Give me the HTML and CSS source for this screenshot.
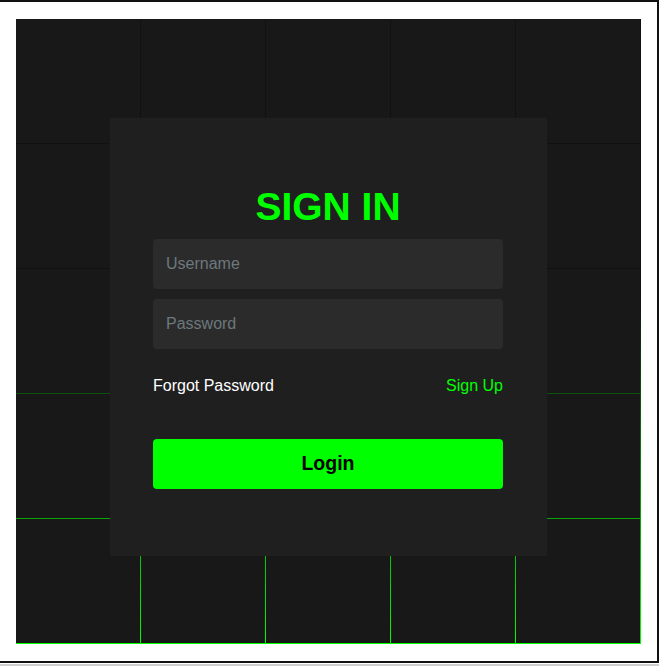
FILE: index.html
```html
<!DOCTYPE html>
<html>
<head>
    <title>Sign In</title>
    <link rel="stylesheet" href="styles.css">
</head>
<body>
    <div class="frame">
        <section class="scene">
            <span class="cell"></span><span class="cell"></span><span class="cell"></span><span class="cell"></span><span class="cell"></span>
            <span class="cell"></span><span class="cell"></span><span class="cell"></span><span class="cell"></span><span class="cell"></span>
            <span class="cell"></span><span class="cell"></span><span class="cell"></span><span class="cell"></span><span class="cell"></span>
            <span class="cell"></span><span class="cell"></span><span class="cell"></span><span class="cell"></span><span class="cell"></span>
            <span class="cell"></span><span class="cell"></span><span class="cell"></span><span class="cell"></span><span class="cell"></span>

            <div class="signin">
                <h2>SIGN IN</h2>
                <div class="inputBox">
                    <input type="text" placeholder="Username">
                </div>
                <div class="inputBox">
                    <input type="password" placeholder="Password">
                </div>
                <div class="links">
                    <a href="#" class="forgot">Forgot Password</a>
                    <a href="#" class="signup">Sign Up</a>
                </div>
                <button type="submit">Login</button>
            </div>
        </section>
    </div>
    <div class="page-edge"></div>
</body>
</html>
```

FILE: styles.css
```css
body {
    margin: 0;
    font-family: "Liberation Sans", Arial, sans-serif;
    background: #fff;
}
.frame {
    border-top: 2px solid #111;
    border-right: 2px solid #111;
    border-bottom: 2px solid #111;
    padding: 17px 16px;
}
.page-edge {
    height: 2px;
    margin-top: 1px;
    background: #cfcfcf;
}
.scene {
    position: relative;
    display: grid;
    grid-template-columns: repeat(5, 124px);
    grid-auto-rows: 124px;
    gap: 1px;
    padding: 0 1px 1px 0;
    width: max-content;
    background: linear-gradient(to bottom, #111 0%, #111 45%, #0f0 100%);
}
.cell {
    background: #181818;
}
.signin {
    position: absolute;
    left: 94px;
    top: 99px;
    width: 437px;
    height: 438px;
    box-sizing: border-box;
    padding: 0 44px 2px 43px;
    background: #1f1f1f;
    display: flex;
    flex-direction: column;
    justify-content: center;
}
.signin h2 {
    margin: 0 0 10px;
    font-size: 39px;
    line-height: 45px;
    color: #0f0;
    text-align: center;
}
.inputBox + .inputBox {
    margin-top: 10px;
}
.inputBox input {
    display: block;
    width: 100%;
    height: 50px;
    box-sizing: border-box;
    padding: 0 13px;
    border: none;
    border-radius: 4px;
    outline: none;
    background: #2b2b2b;
    color: #fff;
    font-family: inherit;
    font-size: 16px;
}
.inputBox input::placeholder {
    color: #6d787d;
}
.links {
    display: flex;
    justify-content: space-between;
    margin-top: 27.5px;
    font-size: 16px;
    line-height: 20px;
}
.links a {
    text-decoration: none;
}
.links .forgot {
    color: #fff;
}
.links .signup {
    color: #0f0;
}
.signin button {
    margin-top: 42.5px;
    height: 50px;
    border: none;
    border-radius: 4px;
    background: #0f0;
    color: #000;
    font-family: inherit;
    font-size: 19.5px;
    font-weight: bold;
    cursor: pointer;
}
```
